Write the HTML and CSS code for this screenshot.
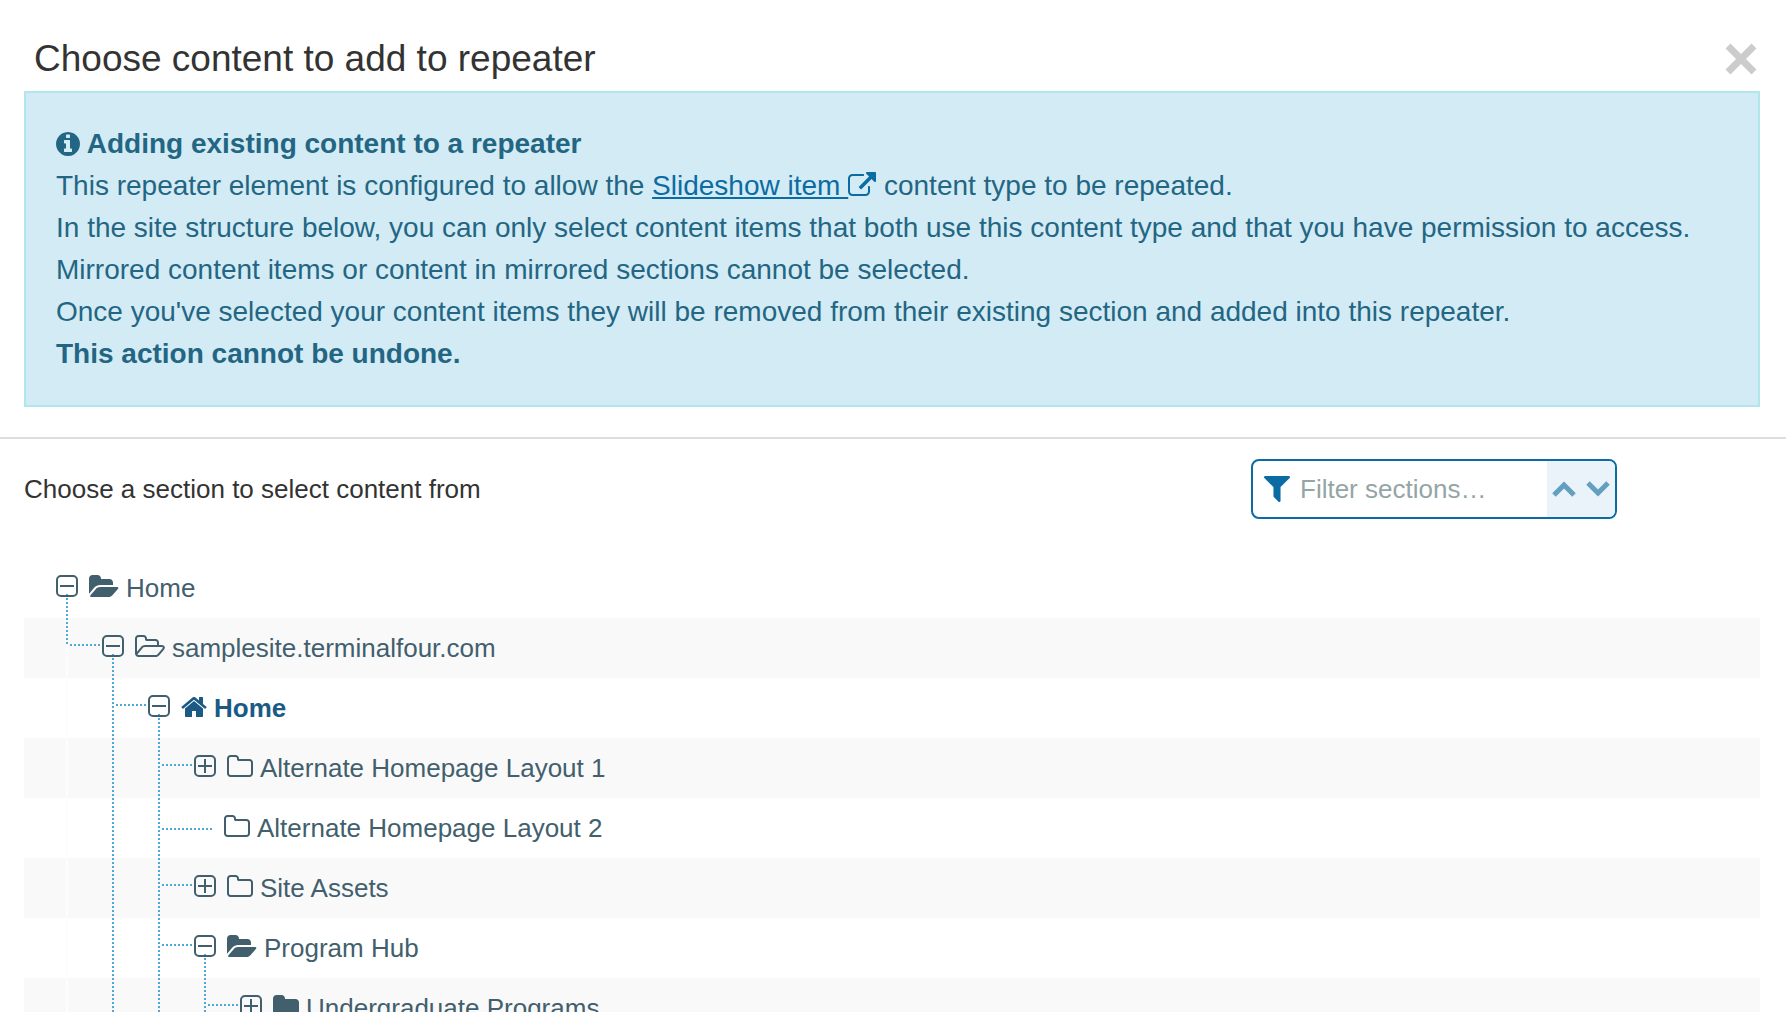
FILE: index.html
```html
<!DOCTYPE html>
<html lang="en">
<head>
    <meta charset="UTF-8">
    <meta name="viewport" content="width=device-width, initial-scale=1.0">
    <title>Choose content to add to repeater</title>
    <link rel="stylesheet" href="styles.css">
</head>
<body>

    <!-- Shared icons -->
    <svg class="sprite" aria-hidden="true">
        <symbol id="minus" viewBox="0 0 22 22">
            <rect x="1" y="1" width="20" height="20" rx="4" fill="none" stroke="currentColor" stroke-width="2"/>
            <path d="M4 11h14" stroke="currentColor" stroke-width="2"/>
        </symbol>
        <symbol id="plus" viewBox="0 0 22 22">
            <rect x="1" y="1" width="20" height="20" rx="4" fill="none" stroke="currentColor" stroke-width="2"/>
            <path d="M4 11h14M11 4v14" stroke="currentColor" stroke-width="2"/>
        </symbol>
        <symbol id="folder" viewBox="0 128 1664 1408">
            <path d="M1664 608v704q0 92-66 158t-158 66h-1216q-92 0-158-66t-66-158v-960q0-92 66-158t158-66h320q92 0 158 66t66 158v32h672q92 0 158 66t66 158z"/>
        </symbol>
        <symbol id="folder-o" viewBox="0 128 1664 1408">
            <path d="M1536 1312v-704q0-40-28-68t-68-28h-704q-40 0-68-28t-28-68v-64q0-40-28-68t-68-28h-320q-40 0-68 28t-28 68v960q0 40 28 68t68 28h1216q40 0 68-28t28-68zm128-704v704q0 92-66 158t-158 66h-1216q-92 0-158-66t-66-158v-960q0-92 66-158t158-66h320q92 0 158 66t66 158v32h672q92 0 158 66t66 158z"/>
        </symbol>
        <symbol id="folder-open" viewBox="0 128 1920 1408">
            <path d="M1879 952q0 31-31 66l-336 396q-43 51-120.5 86.5t-143.5 35.5h-1088q-34 0-60.5-13t-26.5-43q0-31 31-66l336-396q43-51 120.5-86.5t143.5-35.5h1088q34 0 60.5 13t26.5 43zm-343-344v160h-832q-94 0-197 47.5t-164 119.5l-337 396-5 6q0-4-.5-12.5t-.5-12.5v-960q0-92 66-158t158-66h320q92 0 158 66t66 158v32h544q92 0 158 66t66 158z"/>
        </symbol>
        <symbol id="folder-open-o" viewBox="0 198 1920 1408">
            <path d="M1781 1001q0-35-53-35h-1088q-40 0-85.5 21.5t-71.5 52.5l-294 363q-18 24-18 40 0 35 53 35h1088q40 0 86-22t71-53l294-363q18-22 18-39zm-1141-163h768v-160q0-40-28-68t-68-28h-576q-40 0-68-28t-28-68v-64q0-40-28-68t-68-28h-320q-40 0-68 28t-28 68v853l256-315q44-53 116-87.5t140-34.5zm1269 163q0 62-46 120l-295 363q-43 53-116 87.5t-140 34.5h-1088q-92 0-158-66t-66-158v-960q0-92 66-158t158-66h320q92 0 158 66t66 158v32h544q92 0 158 66t66 158v160h192q54 0 99 24.5t67 70.5q15 32 15 68z"/>
        </symbol>
        <symbol id="house" viewBox="0 128 1664 1408">
            <path d="M1408 992v480q0 26-19 45t-45 19h-384v-384h-256v384h-384q-26 0-45-19t-19-45v-480q0-1 .5-3t.5-3l575-474 575 474q1 2 1 6zm223-69l-62 74q-8 9-21 11h-3q-13 0-21-7l-692-577-692 577q-12 8-24 7-13-2-21-11l-62-74q-8-10-7-23.5t11-21.5l719-599q32-26 76-26t76 26l244 204v-195q0-14 9-23t23-9h192q14 0 23 9t9 23v408l219 182q10 8 11 21.5t-7 23.5z"/>
        </symbol>
    </svg>

    <header class="modal-header">
        <h1>Choose content to add to repeater</h1>
        <button type="button" class="close" aria-label="Close">
            <svg width="32" height="32" viewBox="0 0 32 32"><path d="M3 3l26 26M29 3L3 29" stroke="currentColor" stroke-width="7"/></svg>
        </button>
    </header>

    <div class="alert">
        <strong><svg class="icon-info" viewBox="0 128 1536 1536" aria-hidden="true"><path d="M1024 1376v-160q0-14-9-23t-23-9h-96v-512q0-14-9-23t-23-9h-320q-14 0-23 9t-9 23v160q0 14 9 23t23 9h96v320h-96q-14 0-23 9t-9 23v160q0 14 9 23t23 9h448q14 0 23-9t9-23zm-128-896v-160q0-14-9-23t-23-9h-192q-14 0-23 9t-9 23v160q0 14 9 23t23 9h192q14 0 23-9t9-23zm640 416q0 209-103 385.5t-279.5 279.5-385.5 103-385.5-103-279.5-279.5-103-385.5 103-385.5 279.5-279.5 385.5-103 385.5 103 279.5 279.5 103 385.5z"/></svg> Adding existing content to a repeater</strong><br>
        This repeater element is configured to allow the <a href="#">Slideshow item <svg class="icon-external" viewBox="0 0 1792 1536" aria-hidden="true"><path d="M1408 928v320q0 119-84.5 203.5t-203.5 84.5h-832q-119 0-203.5-84.5t-84.5-203.5v-832q0-119 84.5-203.5t203.5-84.5h704q14 0 23 9t9 23v64q0 14-9 23t-23 9h-704q-66 0-113 47t-47 113v832q0 66 47 113t113 47h832q66 0 113-47t47-113v-320q0-14 9-23t23-9h64q14 0 23 9t9 23zm384-864v512q0 26-19 45t-45 19-45-19l-176-176-652 652q-10 10-23 10t-23-10l-114-114q-10-10-10-23t10-23l652-652-176-176q-19-19-19-45t19-45 45-19h512q26 0 45 19t19 45z"/></svg></a> content type to be repeated.<br>
        In the site structure below, you can only select content items that both use this content type and that you have permission to access.<br>
        Mirrored content items or content in mirrored sections cannot be selected.<br>
        Once you've selected your content items they will be removed from their existing section and added into this repeater.<br>
        <strong>This action cannot be undone.</strong>
    </div>

    <main class="chooser">
        <div class="toolbar">
            <label for="filter">Choose a section to select content from</label>
            <div class="filter">
                <svg class="icon-filter" viewBox="0 256 1408 1408" aria-hidden="true"><path d="M1403 295q17 41-14 70l-493 493v742q0 42-39 59-13 5-25 5-27 0-45-19l-256-256q-19-19-19-45v-486l-493-493q-31-29-14-70 17-39 59-39h1280q42 0 59 39z"/></svg>
                <input type="text" id="filter" placeholder="Filter sections…">
                <div class="filter-nav">
                    <button type="button" aria-label="Previous match"><svg width="24" height="16" viewBox="0 0 24 16"><path d="M2 14L12 4l10 10" fill="none" stroke="currentColor" stroke-width="5"/></svg></button>
                    <button type="button" aria-label="Next match"><svg width="24" height="16" viewBox="0 0 24 16"><path d="M2 2l10 10L22 2" fill="none" stroke="currentColor" stroke-width="5"/></svg></button>
                </div>
            </div>
        </div>

        <ul class="tree">
            <li>
                <span class="node open"><button type="button" aria-label="Collapse Home"><svg><use href="#minus"/></svg></button></span>
                <a href="#"><svg class="wide"><use href="#folder-open"/></svg>Home</a>
            </li>
            <li>
                <span class="guide root last branch"></span>
                <span class="node open"><button type="button" aria-label="Collapse samplesite.terminalfour.com"><svg><use href="#minus"/></svg></button></span>
                <a href="#"><svg class="wide"><use href="#folder-open-o"/></svg>samplesite.terminalfour.com</a>
            </li>
            <li>
                <span class="guide root"></span>
                <span class="guide line branch"></span>
                <span class="node open"><button type="button" aria-label="Collapse Home"><svg><use href="#minus"/></svg></button></span>
                <a href="#" class="current"><svg><use href="#house"/></svg>Home</a>
            </li>
            <li>
                <span class="guide root"></span>
                <span class="guide line"></span>
                <span class="guide line branch"></span>
                <span class="node"><button type="button" aria-label="Expand Alternate Homepage Layout 1"><svg><use href="#plus"/></svg></button></span>
                <a href="#"><svg><use href="#folder-o"/></svg>Alternate Homepage Layout 1</a>
            </li>
            <li>
                <span class="guide root"></span>
                <span class="guide line"></span>
                <span class="guide line leaf"></span>
                <a href="#"><svg><use href="#folder-o"/></svg>Alternate Homepage Layout 2</a>
            </li>
            <li>
                <span class="guide root"></span>
                <span class="guide line"></span>
                <span class="guide line branch"></span>
                <span class="node"><button type="button" aria-label="Expand Site Assets"><svg><use href="#plus"/></svg></button></span>
                <a href="#"><svg><use href="#folder-o"/></svg>Site Assets</a>
            </li>
            <li>
                <span class="guide root"></span>
                <span class="guide line"></span>
                <span class="guide line branch"></span>
                <span class="node open"><button type="button" aria-label="Collapse Program Hub"><svg><use href="#minus"/></svg></button></span>
                <a href="#"><svg class="wide"><use href="#folder-open"/></svg>Program Hub</a>
            </li>
            <li>
                <span class="guide root"></span>
                <span class="guide line"></span>
                <span class="guide line"></span>
                <span class="guide line branch"></span>
                <span class="node"><button type="button" aria-label="Expand Undergraduate Programs"><svg><use href="#plus"/></svg></button></span>
                <a href="#"><svg><use href="#folder"/></svg>Undergraduate Programs</a>
            </li>
        </ul>
    </main>

</body>
</html>
```

FILE: styles.css
```css
* {
    box-sizing: border-box;
}

html {
    height: 100%;
    overflow: hidden;
}

body {
    margin: 0;
    height: 100%;
    overflow: hidden;
    font-family: "Helvetica Neue", "Liberation Sans", Arial, sans-serif;
    font-size: 26px;
    color: #333;
    background-color: #fff;
}

button {
    padding: 0;
    border: none;
    background: none;
    color: inherit;
    cursor: pointer;
}

svg {
    fill: currentColor;
}

.sprite {
    display: none;
}

/* Header */
.modal-header {
    display: flex;
    justify-content: space-between;
    align-items: center;
    padding: 37px 29px 10px 34px;
}

.modal-header h1 {
    margin: 0;
    font-size: 37px;
    font-weight: normal;
    line-height: 44px;
}

.close {
    display: flex;
    color: #ccc;
}

/* Info box */
.alert {
    margin: 0 26px 30px 24px;
    padding: 30px;
    border: 2px solid #b0e6ec;
    background-color: #d3ebf5;
    color: #236683;
    font-size: 28px;
    line-height: 42px;
}

.alert a {
    color: #0a6ca3;
    text-decoration: underline;
}

.icon-info {
    width: 24px;
    height: 24px;
    vertical-align: -3px;
}

.icon-external {
    width: 28px;
    height: 24px;
    vertical-align: -1px;
}

/* Section chooser */
.chooser {
    border-top: 2px solid #ddd;
    padding: 20px 26px 0 24px;
}

.toolbar {
    display: flex;
    justify-content: space-between;
    align-items: center;
    margin-bottom: 39px;
    padding-right: 143px;
}

.filter {
    display: flex;
    align-items: center;
    width: 366px;
    height: 60px;
    border: 2px solid #0a6ca3;
    border-radius: 8px;
    overflow: hidden;
    color: #0a6ca3;
}

.icon-filter {
    flex: none;
    width: 26px;
    height: 26px;
    margin: 0 10px 0 11px;
}

.filter input {
    flex: 1;
    min-width: 0;
    padding: 0;
    border: none;
    outline: none;
    background: none;
    font: inherit;
    color: #333;
}

.filter input::placeholder {
    color: #95a5a6;
    opacity: 1;
}

.filter-nav {
    display: flex;
    align-self: stretch;
    align-items: center;
    gap: 10px;
    padding: 0 5px;
    background-color: #eaf3fa;
    color: #649fc0;
}

.filter-nav button {
    display: flex;
}

/* Tree */
.tree {
    margin: 0;
    padding: 0;
    list-style: none;
    color: #425f6e;
}

.tree li {
    display: flex;
    height: 60px;
    padding-left: 32px;
}

.tree li:nth-child(even) {
    background-color: #f9f9f9;
}

.tree a {
    display: flex;
    align-items: center;
    padding-left: 11px;
    color: inherit;
    line-height: 60px;
    text-decoration: none;
    white-space: nowrap;
}

.tree svg {
    width: 22px;
    height: 22px;
}

.tree a svg {
    width: 26px;
    margin: 0 7px 4px 0;
}

.tree a .wide {
    width: 30px;
}

.tree .current {
    color: #1a5a85;
    font-weight: bold;
}

.node {
    width: 22px;
    padding-top: 17px;
}

.node button {
    display: flex;
}

/* Dotted connectors, 2px dots every 4px */
.guide {
    width: 46px;
    background-repeat: no-repeat;
}

.guide,
.node {
    flex: none;
    --down: repeating-linear-gradient(to bottom, #4fa9d4 0 2px, transparent 2px 4px);
    --across: repeating-linear-gradient(to right, #4fa9d4 0 2px, transparent 2px 4px);
    --gap: linear-gradient(#fdfdfd, #fdfdfd);
}

.node.open {
    background: var(--down) 10px 36px / 2px 24px no-repeat;
}

.guide.root {
    background-image: var(--gap);
    background-size: 2px 100%;
    background-position: 10px 0;
}

.guide.line {
    background-image: var(--down);
    background-size: 2px 60px;
    background-position: 10px 0;
}

.guide.line.branch {
    background-image: var(--down), var(--across);
    background-size: 2px 60px, 30px 2px;
    background-position: 10px 0, 14px 26px;
}

.guide.line.leaf {
    width: 65px;
    background-image: var(--down), var(--across);
    background-size: 2px 60px, 50px 2px;
    background-position: 10px 0, 14px 30px;
}

.guide.root.last {
    background-image: var(--down), var(--across), var(--gap);
    background-size: 2px 26px, 30px 2px, 2px 100%;
    background-position: 10px 0, 14px 26px, 10px 0;
}
```
